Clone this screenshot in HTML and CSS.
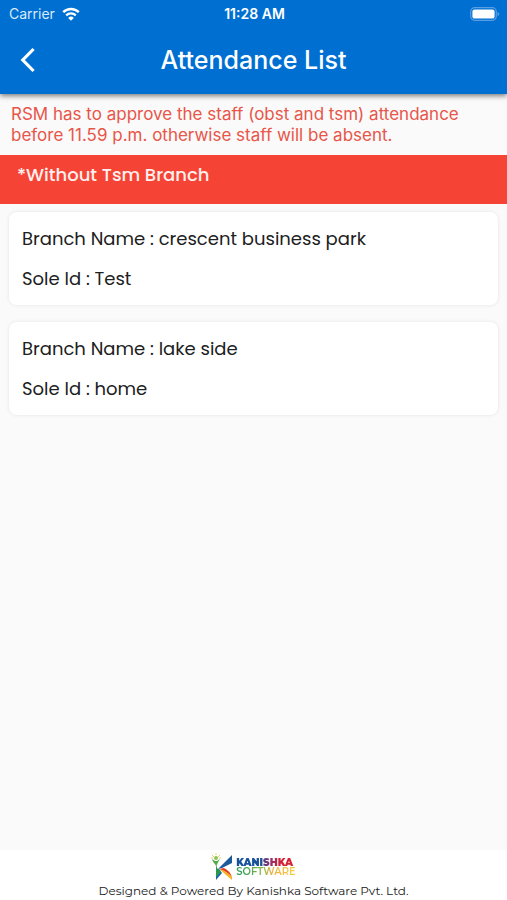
FILE: index.html
```html
<!DOCTYPE html>
<html lang="en">
<head>
  <meta charset="utf-8">
  <meta name="viewport" content="width=device-width, initial-scale=1">
  <title>Attendance List</title>
  <link rel="stylesheet" href="styles.css">
</head>
<body>
  <header class="top">
    <div class="status">
      <div class="carrier">
        <span>Carrier</span>
        <svg class="wifi" viewBox="0 0 18 14" aria-hidden="true">
          <path d="M1.2 5.2a11.2 11.2 0 0 1 15.6 0" fill="none" stroke="#fff" stroke-width="2.5"/>
          <path d="M4.2 8.3a7 7 0 0 1 9.6 0" fill="none" stroke="#fff" stroke-width="2.3"/>
          <path d="M9 13.8 6.2 10.9a4 4 0 0 1 5.6 0z" fill="#fff"/>
        </svg>
      </div>
      <time class="clock">11:28 AM</time>
      <div class="power">
        <svg class="battery" viewBox="0 0 30 14" aria-hidden="true">
          <rect x=".7" y=".7" width="25.6" height="12.6" rx="4" fill="none" stroke="#589fe3" stroke-width="1.2"/>
          <rect x="2.4" y="2.4" width="22.2" height="9.2" rx="2.2" fill="#fff"/>
          <path d="M27.6 4.8c2.2.8 2.2 3.6 0 4.4z" fill="#589fe3"/>
        </svg>
      </div>
    </div>
    <nav class="bar">
      <button class="back" type="button" aria-label="Back">
        <svg viewBox="0 0 16 26" aria-hidden="true"><path d="M13.6 2 2.8 13l10.8 11" fill="none" stroke="#fff" stroke-width="3.2"/></svg>
      </button>
      <h1 class="title">Attendance List</h1>
    </nav>
  </header>
  <main class="content">
    <p class="notice">RSM has to approve the staff (obst and tsm) attendance before 11.59 p.m. otherwise staff will be absent.</p>
    <h2 class="section">*Without Tsm Branch</h2>
    <ul class="branches">
      <li class="card">
        <p>Branch Name : crescent business park</p>
        <p>Sole Id : Test</p>
      </li>
      <li class="card">
        <p>Branch Name : lake side</p>
        <p>Sole Id : home</p>
      </li>
    </ul>
  </main>
  <footer class="footer">
    <div class="logo">
      <svg class="mark" viewBox="0 0 22 28" aria-hidden="true">
        <path d="M21 2v8L11 15l-4 1z" fill="#1d5a9c"/>
        <path d="m8 16 5-1q6 3 8 9-6-6-13-8z" fill="#e33b24"/>
        <path d="m8 16q8 2 13 8v3z" fill="#f5b324"/>
        <path d="M5 16v11l6-7-3-4z" fill="#1a64ad"/>
        <path d="m5 10 1 5 4 4-5 5z" fill="#249a4a"/>
        <path d="M1 6c1 4 3 4 4 7 2-3 2-4 4-7L6 8H4z" fill="#55aa48"/>
        <circle cx="5" cy="5" r="2" fill="#8fc558"/>
        <path d="M5 0v2M1 2l2 2m6-2L7 4M0 5h2m6 0h2" stroke="#e6dc70" fill="none"/>
      </svg>
      <div class="wordmark">
        <span class="word company">KANISHKA</span>
        <span class="word software">SOFTWARE</span>
      </div>
    </div>
    <p class="credit">Designed &amp; Powered By Kanishka Software Pvt. Ltd.</p>
  </footer>
</body>
</html>
```
FILE: styles.css
```css
* { box-sizing: border-box; }
body {
  margin: 0;
  min-height: 100vh;
  display: flex;
  flex-direction: column;
  background: #fafafa;
  color: #202020;
  font-family: Poppins, Inter, sans-serif;
}
h1, h2, p, ul { margin: 0; padding: 0; }
.top {
  background: #006fd2;
  color: #fff;
  font-family: Inter, sans-serif;
  box-shadow: 0 2px 5px rgba(0, 0, 0, .5);
}
.status {
  height: 27px;
  padding: 0 7px 0 9px;
  display: grid;
  grid-template-columns: 1fr auto 1fr;
  align-items: center;
  font-size: 14px;
}
.carrier { display: flex; align-items: center; gap: 7px; color: #d9eafa; }
.wifi { width: 18px; height: 14px; }
.clock { font-weight: 600; }
.power { display: flex; justify-content: flex-end; }
.battery { width: 30px; height: 14px; }
.bar {
  height: 67px;
  padding: 0 16px 2px;
  display: grid;
  grid-template-columns: 24px 1fr 24px;
  align-items: center;
}
.back {
  height: 40px;
  padding: 0 4px;
  border: 0;
  background: none;
  display: flex;
  align-items: center;
}
.back svg { width: 16px; height: 26px; }
.title { text-align: center; font-size: 25px; line-height: 32px; font-weight: 500; }
.content { flex: 1; }
.notice {
  padding: 10px 11px 9px;
  color: #e85549;
  font-family: Inter, sans-serif;
  font-size: 17px;
  line-height: 21px;
}
.section {
  min-height: 49px;
  padding: 8px 17px;
  background: #f54336;
  color: #fff0ed;
  font-size: 18px;
  line-height: 24px;
  font-weight: 500;
}
.branches {
  list-style: none;
  padding: 8px 9px;
  display: flex;
  flex-direction: column;
  gap: 17px;
}
.card {
  padding: 15px 13px 14px;
  display: flex;
  flex-direction: column;
  gap: 16px;
  border-radius: 8px;
  background: #fff;
  box-shadow: 0 0 3px 1px #ededed;
  font-size: 18px;
  line-height: 24px;
}
.footer {
  padding: 3px 8px 0;
  height: 50px;
  background: #fff;
  display: flex;
  flex-direction: column;
  align-items: center;
}
.logo { display: flex; align-items: center; gap: 3px; }
.mark { width: 22px; height: 28px; }
.wordmark { display: flex; flex-direction: column; font-family: Montserrat, Inter, sans-serif; font-size: 10px; line-height: 9px; }
.word { background-clip: text; -webkit-background-clip: text; color: transparent; }
.company { font-weight: 900; background-image: linear-gradient(90deg, #17539a 40%, #8a3271 55%, #d32235 75%); }
.software { font-weight: 600; background-image: linear-gradient(90deg, #319d55 10%, #8cb947 45%, #efac39 60%, #f1d34b); }
.credit { font-family: Montserrat, Inter, sans-serif; font-size: 12px; line-height: 20px; }
```
